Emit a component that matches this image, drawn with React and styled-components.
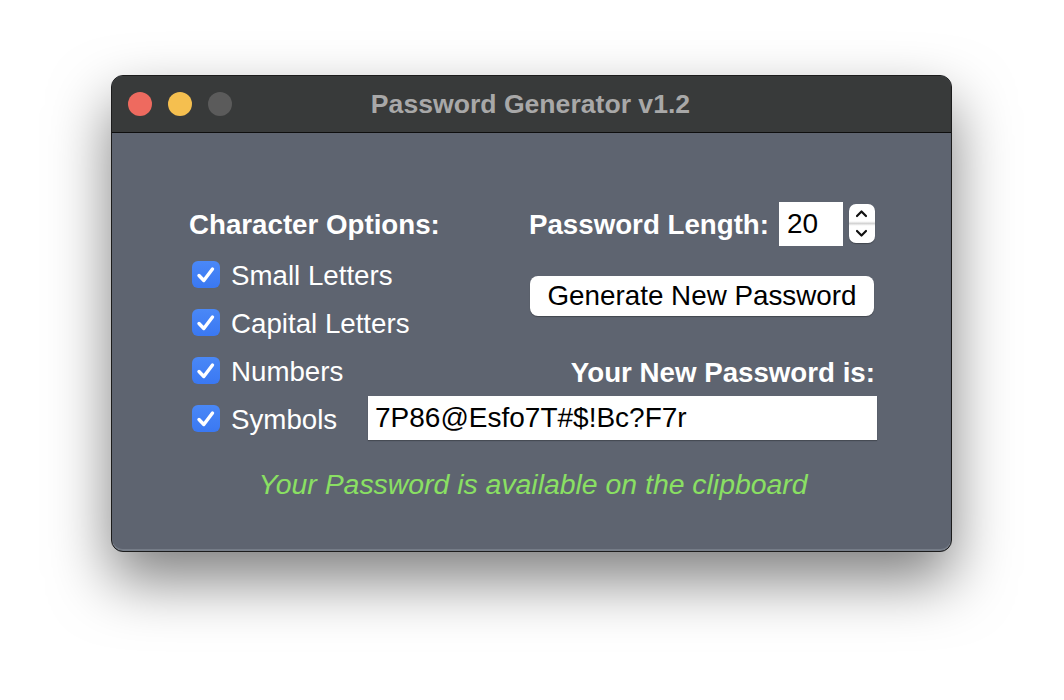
import { createGlobalStyle, styled } from "styled-components";

const GlobalStyle = createGlobalStyle`
  body {
    margin: 0;
    background: #ffffff;
    font-family: "Liberation Sans", Arial, sans-serif;
  }
`;

const Page = styled.div`
  padding: 75px 0 0 111px;
  height: 625px;
`;

const Window = styled.div`
  width: 839px;
  height: 475px;
  border: 1px solid #1c1c1c;
  border-radius: 12px;
  overflow: hidden;
  background: #5e6470;
  box-shadow: inset 0 -2px 0 #757c87, 0 28px 60px rgba(0, 0, 0, 0.5);
  display: flex;
  flex-direction: column;
`;

const TitleBar = styled.div`
  height: 56px;
  flex: none;
  background: #383a3a;
  border-bottom: 1px solid #0e0e0e;
  display: grid;
  grid-template-columns: 1fr auto 1fr;
  align-items: center;
  padding: 0 16px;
`;

const Lights = styled.div`
  display: flex;
  gap: 16px;
`;

const Light = styled.span`
  width: 24px;
  height: 24px;
  border-radius: 50%;
  background: ${(p) => p.$color};
`;

const Title = styled.div`
  color: #a8a8a8;
  font-weight: 700;
  font-size: 26.6px;
  margin-left: -2px;
`;

const Content = styled.div`
  display: grid;
  grid-template-columns: 179px 161px 1fr;
  grid-template-rows: 52px 48px 48px 48px 48px auto;
  padding: 67px 75px 0 77px;
  color: #ffffff;
`;

const Heading = styled.div`
  font-weight: 700;
  font-size: 27.7px;
  line-height: 44px;
  white-space: nowrap;
  grid-column: ${(p) => p.$col};
  grid-row: ${(p) => p.$row};
  justify-self: ${(p) => p.$justify || "start"};
  align-self: ${(p) => p.$align || "start"};
  margin-right: ${(p) => p.$mr || 0}px;
  padding-top: ${(p) => p.$pt || 0}px;
`;

const LengthGroup = styled.div`
  grid-column: 3;
  grid-row: 1;
  justify-self: end;
  align-self: start;
  display: flex;
  align-items: center;
  margin-right: 1px;
`;

const NumberBox = styled.input`
  width: 64px;
  height: 44px;
  box-sizing: border-box;
  margin-left: 10px;
  border: none;
  padding: 0 0 0 8px;
  background: #ffffff;
  color: #000000;
  font-family: "Liberation Sans", Arial, sans-serif;
  font-size: 28px;
  outline: none;
`;

const Stepper = styled.div`
  width: 26px;
  height: 39px;
  margin: 0 1px 0 6px;
  border-radius: 7px;
  background: linear-gradient(#ffffff 44%, #d4d4d4 50%, #ffffff 56%);
  box-shadow: 0 1px 1px rgba(0, 0, 0, 0.3);
  display: flex;
  flex-direction: column;
  align-items: center;
  justify-content: space-between;
  padding: 5px 0;
  box-sizing: border-box;
`;

const CheckRow = styled.label`
  grid-column: 1 / 3;
  grid-row: ${(p) => p.$row};
  display: flex;
  align-items: center;
  gap: 11px;
  padding-left: 3px;
  font-size: 27.7px;
  white-space: nowrap;
`;

const Box = styled.span`
  width: 28px;
  height: 27px;
  border-radius: 6px;
  background: linear-gradient(#4a88f7, #3a78f2);
  display: flex;
  align-items: center;
  justify-content: center;
  margin-top: -3px;
`;

const GenerateButton = styled.button`
  grid-column: 3;
  grid-row: 2 / 4;
  align-self: start;
  margin: 24px 0 0 1px;
  width: 344px;
  height: 40px;
  border: none;
  border-radius: 8px;
  background: #ffffff;
  color: #000000;
  font-family: "Liberation Sans", Arial, sans-serif;
  font-size: 27.8px;
  box-shadow: 0 1px 1px rgba(0, 0, 0, 0.3);
  padding: 0;
`;

const PasswordField = styled.input`
  grid-column: 2 / 4;
  grid-row: 5;
  align-self: start;
  height: 44px;
  box-sizing: border-box;
  border: none;
  padding: 0 0 0 7px;
  background: #ffffff;
  color: #000000;
  font-family: "Liberation Sans", Arial, sans-serif;
  font-size: 28px;
  box-shadow: 0 1px 1px rgba(0, 0, 0, 0.25);
  outline: none;
`;

const Notice = styled.div`
  grid-column: 1 / -1;
  grid-row: 6;
  margin-top: 20px;
  line-height: 40px;
  text-align: center;
  color: #8ae063;
  font-style: italic;
  font-size: 28.4px;
`;

const Check = () => (
  <svg width="20" height="18" viewBox="0 0 20 18">
    <path d="M3 9.5 L7.8 14.5 L16.5 3" fill="none" stroke="#fff" strokeWidth="3.4" strokeLinecap="round" strokeLinejoin="round" />
  </svg>
);

const Chevron = ({ up }) => (
  <svg width="13" height="9" viewBox="0 0 13 9">
    <path d={up ? "M2 7 L6.5 2.5 L11 7" : "M2 2 L6.5 6.5 L11 2"} fill="none" stroke="#111" strokeWidth="2.2" strokeLinecap="round" strokeLinejoin="round" />
  </svg>
);

const options = ["Small Letters", "Capital Letters", "Numbers", "Symbols"];

export default function App() {
  return (
    <>
      <GlobalStyle />
      <Page>
        <Window>
          <TitleBar>
            <Lights>
              <Light $color="#ee6a5f" />
              <Light $color="#f5bf4f" />
              <Light $color="#5b5b5b" />
            </Lights>
            <Title>Password Generator v1.2</Title>
            <span />
          </TitleBar>
          <Content>
            <Heading $col="1 / 3" $row="1" $pt={3}>Character Options:</Heading>
            <LengthGroup>
              <Heading as="span" $pt={3}>Password Length:</Heading>
              <NumberBox readOnly value="20" />
              <Stepper>
                <Chevron up />
                <Chevron />
              </Stepper>
            </LengthGroup>
            {options.map((o, i) => (
              <CheckRow key={o} $row={i + 2}>
                <Box>
                  <Check />
                </Box>
                {o}
              </CheckRow>
            ))}
            <GenerateButton>Generate New Password</GenerateButton>
            <Heading $col="2 / 4" $row="4" $justify="end" $align="center" $mr={2} $pt={2}>
              Your New Password is:
            </Heading>
            <PasswordField readOnly value="7P86@Esfo7T#$!Bc?F7r" />
            <Notice>Your Password is available on the clipboard</Notice>
          </Content>
        </Window>
      </Page>
    </>
  );
}
